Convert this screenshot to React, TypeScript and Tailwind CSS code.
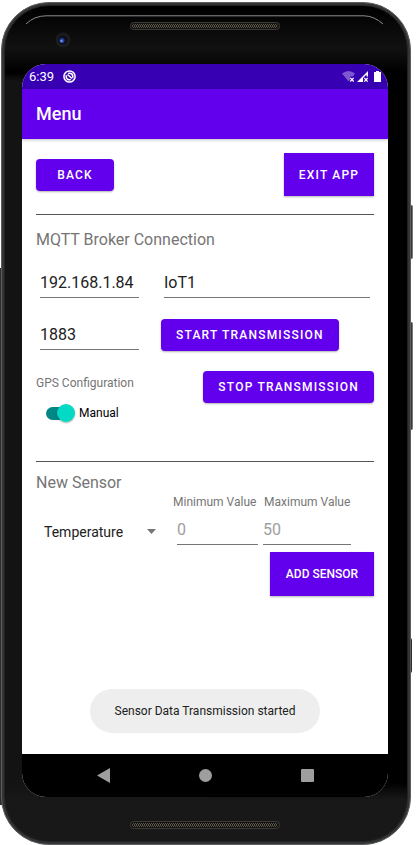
import { useState } from "react";
import type { ReactNode } from "react";

const raised = "bg-[#6200ee] text-xs font-medium text-white shadow-[0_1px_2px_rgba(0,0,0,0.3)]";
const field = "h-[30px] min-w-0 rounded-none border-b border-[#757575] bg-transparent text-base text-[#212121] outline-none placeholder:text-[#9e9e9e]";

function Speaker({ id }: { id: string }) {
  return (
    <svg className="h-2 w-[150px]" viewBox="0 0 150 8" aria-hidden="true">
      <defs>
        <pattern id={id} width="4" height="4" patternUnits="userSpaceOnUse">
          <path d="M0 0l2 2-2 2M2 0l2 2-2 2" fill="none" stroke="#5a564c" strokeWidth="1" />
        </pattern>
      </defs>
      <rect x="0.5" y="0.5" width="149" height="7" rx="3" fill="#14130f" stroke="#3c3a36" />
      <rect x="2" y="2" width="146" height="4" rx="2" fill={`url(#${id})`} />
    </svg>
  );
}

function StatusBar() {
  return (
    <div className="flex h-[25px] items-center bg-[#3700b3] pr-[7px] pl-[7px] text-white">
      <span className="text-[13px] leading-4">6:39</span>
      <svg className="ml-[9px] h-[13px] w-[13px]" viewBox="0 0 13 13" aria-hidden="true">
        <circle cx="6.5" cy="6.5" r="5.6" fill="none" stroke="#fff" strokeWidth="1.5" />
        <circle cx="6.5" cy="6.5" r="3.3" fill="none" stroke="#fff" strokeWidth="1.600" />
        <path d="M3.500 3.500l6 6" stroke="#3700b3" strokeWidth="2.400" />
        <path d="M4.500 4.500l4.500 4" stroke="#fff" strokeWidth="1.500" />
      </svg>
      <svg className="ml-auto h-[13px] w-[39px]" viewBox="0 0 39 13" aria-hidden="true">
        <path d="M0 3.500Q6.500-1.500 13 3.500L11 6.500H8V10L6.500 11.500Z" fill="#7d57cf" />
        <path d="M8.300 7.800l3.400 3.700M11.700 7.800l-3.400 3.700" stroke="#fff" strokeWidth="1.200" />
        <path d="M15 12L26 1V6.500H24.500V4.500L21 8V12Z" fill="#fff" />
        <path d="M22.300 8l3.400 3.700M25.700 8l-3.400 3.700" stroke="#fff" strokeWidth="1.200" />
        <path d="M34 1h3v1h2v10h-7V2h2Z" fill="#fff" />
      </svg>
    </div>
  );
}

function NavBar() {
  return (
    <nav className="grid h-[43px] grid-cols-3 items-center bg-black px-[30px]">
      <button aria-label="Back" className="justify-self-center">
        <svg className="h-[15px] w-[13px]" viewBox="0 0 13 15"><path d="M13 0v15L0 7.500Z" fill="#9e9e9e" /></svg>
      </button>
      <button aria-label="Home" className="h-[13px] w-[13px] justify-self-center rounded-full bg-[#9e9e9e]" />
      <button aria-label="Recent apps" className="h-[13px] w-[13px] justify-self-center rounded-[1px] bg-[#9e9e9e]" />
    </nav>
  );
}

function Section({ title, className, children }: { title: string; className: string; children: ReactNode }) {
  return (
    <section className={`border-t border-[#555555] ${className}`}>
      <h2 className="text-base leading-5 text-[#757575]">{title}</h2>
      {children}
    </section>
  );
}

export default function App() {
  const [manual, setManual] = useState(true);
  return (
    <div className="relative min-h-screen bg-white pt-0.5 pr-[5px] pl-px font-['Roboto',sans-serif]">
      <div className="absolute top-[268px] bottom-10 left-0 w-1 bg-[#2e2e30]" />
      <div className="absolute top-[205px] right-[3px] h-[54px] w-1 rounded-sm border-r border-[#777] bg-[#3a3838]" />
      <div className="absolute top-[322px] right-[3px] h-[108px] w-1 rounded-sm border-r border-[#777] bg-[#3a3838]" />
      <div className="absolute right-[4px] bottom-[172px] h-[35px] w-1 rounded-sm bg-[#2e2e30]" />
      <div className="relative flex min-h-[843px] flex-col rounded-[48px] border border-[#5c5e60] bg-[#333435] p-0.5">
        <div className="flex flex-1 flex-col rounded-[45px] border border-[#222] bg-[linear-gradient(to_bottom,#000,#111_5%,#000_8%,transparent_9%,transparent_93%,#181818_95%),linear-gradient(to_right,#131313_50%,#000_50%)] pr-[19px] pl-[17px]">
          <header className="relative flex h-[58px] justify-center pt-4">
            <svg className="absolute top-[9px] left-0 h-3 w-full" viewBox="0 0 366 12" preserveAspectRatio="none" aria-hidden="true">
              <path d="M4 9Q12 1 24 .8H342Q352 1 361 9" fill="none" stroke="#8d898b" strokeWidth="1" />
            </svg>
            <svg className="absolute top-[26px] left-[33px] h-4 w-4" viewBox="0 0 16 16" aria-hidden="true">
              <circle cx="8" cy="8" r="7.500" fill="#1c1c1e" />
              <circle cx="8" cy="8" r="4.500" fill="#0b0e1c" />
              <circle cx="7" cy="8.500" r="2.500" fill="#25409a" />
              <circle cx="6.500" cy="9" r="1.200" fill="#6f93ee" />
            </svg>
            <Speaker id="earpiece" />
          </header>

          <div className="flex flex-1 flex-col overflow-hidden rounded-3xl bg-white">
            <StatusBar />
            <div className="z-10 flex h-[50px] items-center bg-[#6200ee] px-[14px] shadow-[0_1px_3px_rgba(0,0,0,0.25)]">
              <h1 className="text-lg font-medium text-white">Menu</h1>
            </div>

            <main className="relative flex-1 px-[14px] pt-[14px]">
              <div className="mb-[18px] flex items-center justify-between">
                <button className={`${raised} h-8 w-[78px] rounded tracking-widest`}>BACK</button>
                <button className={`${raised} h-[43px] w-[90px] tracking-widest`}>EXIT APP</button>
              </div>

              <Section title="MQTT Broker Connection" className="pt-[15px]">
                <div className="mt-[18px] flex gap-[25px] px-1">
                  <input aria-label="Broker address" defaultValue="192.168.1.84" className={`${field} w-[99px]`} />
                  <input aria-label="Topic" defaultValue="IoT1" className={`${field} flex-1`} />
                </div>
                <div className="mt-[21px] flex items-center gap-[22px] pl-1">
                  <input aria-label="Port" defaultValue="1883" className={`${field} w-[99px]`} />
                  <button className={`${raised} h-8 rounded px-[15px] tracking-widest`}>START TRANSMISSION</button>
                </div>
                <div className="mt-5 flex items-start justify-between">
                  <h3 className="pt-1 text-xs text-[#757575]">GPS Configuration</h3>
                  <button className={`${raised} h-8 rounded px-[15px] tracking-widest`}>STOP TRANSMISSION</button>
                </div>
                <label className="mb-[38px] ml-[10px] flex h-5 w-fit items-center gap-1 text-xs text-black">
                  <input type="checkbox" role="switch" checked={manual} onChange={() => setManual(!manual)} className="sr-only" />
                  <span className="flex h-[13px] w-[29px] items-center rounded-l-full bg-linear-to-r from-[#018786] from-70% to-transparent to-70%">
                    <span className={`h-[18px] w-[18px] shrink-0 rounded-full shadow-[0_1px_2px_rgba(0,0,0,0.3)] ${manual ? "ml-auto bg-[#03dac5]" : "bg-[#ececec]"}`} />
                  </span>
                  Manual
                </label>
              </Section>

              <Section title="New Sensor" className="pt-[11px]">
                <div className="mt-px flex items-end">
                  <div className="relative mr-[17px] flex-1">
                    <select aria-label="Sensor type" className="h-[26px] w-full appearance-none bg-transparent pl-2 text-sm text-[#212121] outline-none">
                      <option>Temperature</option>
                      <option>Humidity</option>
                    </select>
                    <svg className="pointer-events-none absolute top-[10px] right-0 h-[5px] w-[9px]" viewBox="0 0 9 5" aria-hidden="true"><path d="M0 0h9L4.500 5Z" fill="#757575" /></svg>
                  </div>
                  <div className="flex w-[90px] flex-col gap-[5px]">
                    <label htmlFor="min" className="text-xs whitespace-nowrap text-[#757575]">Minimum Value</label>
                    <input id="min" placeholder="0" className={`${field} ml-1 w-[81px]`} />
                  </div>
                  <div className="mr-[23px] flex w-[88px] flex-col gap-[5px]">
                    <label htmlFor="max" className="pl-px text-xs whitespace-nowrap text-[#757575]">Maximum Value</label>
                    <input id="max" placeholder="50" className={`${field} w-[88px]`} />
                  </div>
                </div>
                <button className={`${raised} mt-[7px] ml-auto block h-11 w-[104px]`}>ADD SENSOR</button>
              </Section>

              <div role="status" className="absolute bottom-[21px] left-1/2 flex h-11 w-[230px] -translate-x-1/2 items-center justify-center rounded-full bg-[#eeeeee] text-xs whitespace-nowrap text-[#212121]">
                Sensor Data Transmission started
              </div>
            </main>
            <NavBar />
          </div>

          <footer className="flex h-11 justify-center pt-6">
            <Speaker id="loudspeaker" />
          </footer>
        </div>
      </div>
    </div>
  );
}
